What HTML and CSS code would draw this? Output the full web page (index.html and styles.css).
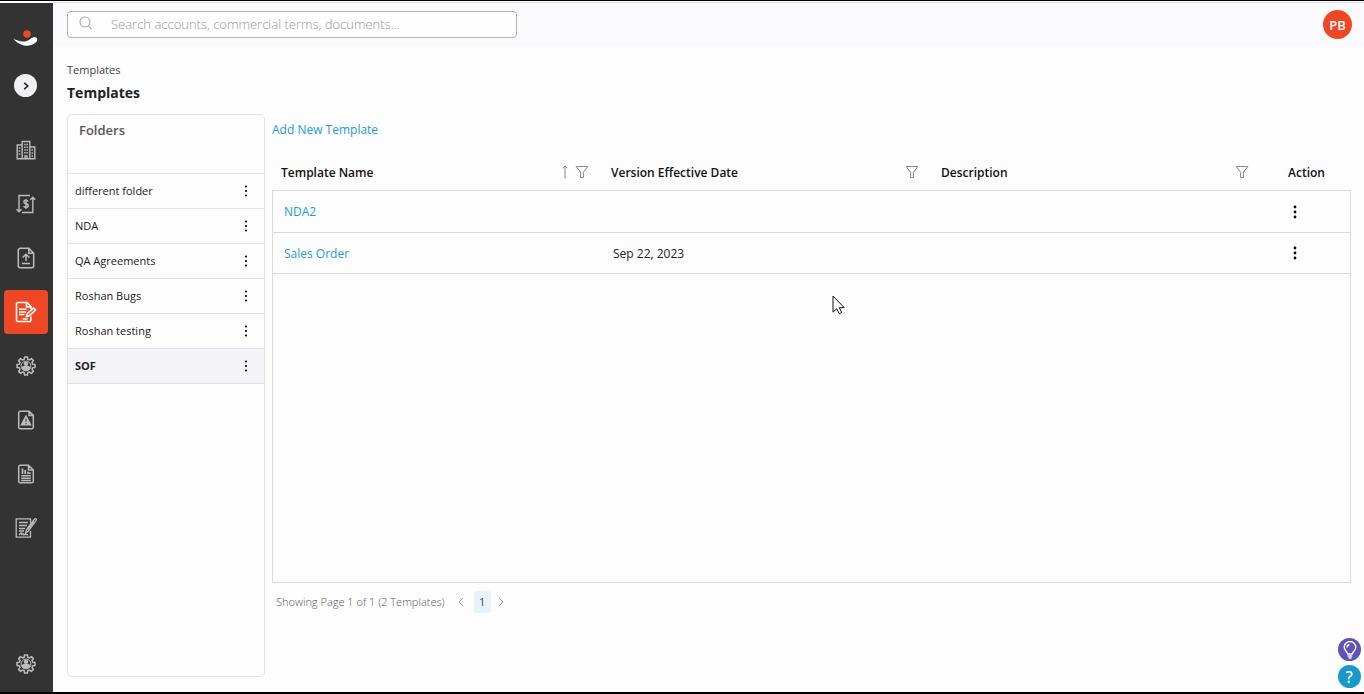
FILE: index.html
```html
<!DOCTYPE html>
<html lang="en">
<head>
    <meta charset="UTF-8">
    <meta name="viewport" content="width=device-width, initial-scale=1.0">
    <title>Templates</title>
    <link rel="stylesheet" href="styles.css">
</head>
<body>
    <!-- shared icons -->
    <svg class="sprite" aria-hidden="true">
        <symbol id="dots" viewBox="0 0 4 16">
            <circle cx="2" cy="3" r="1.4"/><circle cx="2" cy="8" r="1.4"/><circle cx="2" cy="13" r="1.4"/>
        </symbol>
        <symbol id="dots-small" viewBox="0 0 4 14">
            <circle cx="2" cy="2.5" r="1.1"/><circle cx="2" cy="7" r="1.1"/><circle cx="2" cy="11.5" r="1.1"/>
        </symbol>
        <symbol id="filter" viewBox="0 0 14 14">
            <path d="M1.2 1.5h11.6L8.4 7.2v5.3H5.6V7.2z" fill="none" stroke="currentColor"/>
        </symbol>
        <symbol id="gear" viewBox="0 0 20 20">
            <path d="M8.6 1h2.8l.4 2.3 1.7.7 1.9-1.4 2 2L16 6.5l.7 1.7 2.3.4v2.8l-2.3.4-.7 1.7 1.4 1.9-2 2-1.9-1.4-1.7.7-.4 2.3H8.6l-.4-2.3-1.7-.7-1.9 1.4-2-2L4 13.5l-.7-1.7L1 11.4V8.6l2.3-.4L4 6.5 2.6 4.6l2-2L6.5 4l1.7-.7z" fill="none" stroke="currentColor" stroke-width="1.5" stroke-linejoin="round"/>
            <circle cx="10" cy="10" r="4.9" fill="none" stroke="currentColor"/>
            <circle cx="10" cy="7.8" r="2.2" fill="currentColor"/>
            <path d="M5.6 12.4c0-2.2 1.8-2.6 4.4-2.6s4.4.4 4.4 2.6c-1 1.6-2.5 2.4-4.4 2.4s-3.400-.8-4.400-2.400z" fill="currentColor"/>
        </symbol>
    </svg>

    <div class="app">
        <aside class="sidebar">
            <a href="#" class="logo" aria-label="Home">
                <svg width="26" height="20" viewBox="0 0 26 20">
                    <circle cx="14" cy="6" r="3.8" fill="#ee4723"/>
                    <path d="M.2 10.6c5 3 12 4.6 17 .4 2-1.800 4-2.200 5.800-1.400 1.700.8 1.800 3 .2 4.400-3.600 3.400-8.200 4.200-12.200 3.400C6 16.4 2.6 13.8.2 10.600z" fill="#fff"/>
                </svg>
            </a>
            <button class="toggle" aria-label="Expand menu">
                <svg width="10" height="10" viewBox="0 0 10 10"><path d="M3.200 1.800L6.800 5 3.200 8.200" fill="none" stroke="#222" stroke-width="1.600"/></svg>
            </button>
            <nav class="menu">
                <a href="#" class="menu-item" aria-label="Accounts">
                    <svg width="20" height="20" viewBox="0 0 20 20" fill="none" stroke="currentColor" stroke-width="1.4">
                        <path d="M6.2 18.800V1.5h7.600v17.300zM6 5H1.200v13.800h5M14 7h4.800v11.800H14M9 18.500v-2.500h2v2.500"/>
                        <path d="M8.200 4.500h3.800M8.200 7.200h3.800M8.200 10h3.800M8.200 12.800h3.800M2.800 8h2M2.800 11h2M2.800 14h2M15.500 10h2M15.500 13h2M15.500 16h2" stroke-dasharray="1.500 .7"/>
                    </svg>
                </a>
                <a href="#" class="menu-item" aria-label="Orders">
                    <svg width="20" height="20" viewBox="0 0 20 20" fill="none" stroke="currentColor" stroke-width="1.4">
                        <path d="M14 1.500H3v16M.6 15.200L3 17.800l2.400-2.600M6 18.500h10.800v-15M14.400 5.800l2.400-2.600 2.400 2.600"/>
                        <path d="M12.200 7.500c-.5-.9-1.200-1.200-2.200-1.200-2.800 0-2.800 3.200 0 3.500 3 .4 3 3.700 0 3.700-1.100 0-1.900-.4-2.400-1.300M10 5v10"/>
                    </svg>
                </a>
                <a href="#" class="menu-item" aria-label="Uploads">
                    <svg width="20" height="22" viewBox="0 0 20 22" fill="none" stroke="currentColor" stroke-width="1.5">
                        <path d="M12.800 1.300H4.300a2 2 0 0 0-2 2v15.400a2 2 0 0 0 2 2h11.400a2 2 0 0 0 2-2V6.200zM12.800 1.300v4.900h4.900M10 14V7.500M6.600 10.500L10 7.200l3.400 3.300M6 16.500h8"/>
                    </svg>
                </a>
                <a href="#" class="menu-item active" aria-label="Templates" aria-current="page">
                    <svg width="22" height="22" viewBox="0 0 22 22" fill="none" stroke="currentColor" stroke-width="1.600">
                        <path d="M16 8V5.500L12 1.500H3a1.500 1.500 0 0 0-1.500 1.500v16A1.500 1.500 0 0 0 3 20.500h11.500A1.500 1.500 0 0 0 16 19v-3.500M11.500 1.500V6H16M4 8.300h7.500M4 11h7M4 13.500h5.500M7.500 18h5"/>
                        <path d="M11.500 15.500l1-3 6-5.500 2 2-6 5.700z"/>
                    </svg>
                </a>
                <a href="#" class="menu-item" aria-label="Users"><svg width="20" height="20"><use href="#gear"/></svg></a>
                <a href="#" class="menu-item" aria-label="Alerts">
                    <svg width="20" height="20" viewBox="0 0 20 20" fill="none" stroke="currentColor" stroke-width="1.5">
                        <path d="M13 1.200H4.300a1.600 1.600 0 0 0-1.600 1.600v14.400a1.600 1.600 0 0 0 1.600 1.600h11.400a1.600 1.600 0 0 0 1.600-1.600V5.400zM13 1.200v4.200h4.300"/>
                        <path d="M10 6.200l4.500 8.600h-9z" fill="currentColor"/>
                        <path d="M10 8.800v3M10 13v1.200" stroke="#333" stroke-width="1"/>
                    </svg>
                </a>
                <a href="#" class="menu-item" aria-label="Reports">
                    <svg width="20" height="20" viewBox="0 0 20 20" fill="none" stroke="currentColor" stroke-width="1.5">
                        <path d="M12.500 1.200H4.300a1.600 1.600 0 0 0-1.600 1.600v14.400a1.600 1.600 0 0 0 1.600 1.600h11.400a1.600 1.600 0 0 0 1.600-1.600V6zM12.500 1.200V6h4.800M5.200 11.800h9.600M5.200 14.200h9.600M5.200 16.400h9.600"/>
                        <path d="M6.500 10V4.500M9.200 10V6M12 10V7.800M14 10V8.500" stroke-width="1.800"/>
                    </svg>
                </a>
                <a href="#" class="menu-item" aria-label="Signatures">
                    <svg width="22" height="22" viewBox="0 0 22 22" fill="none" stroke="currentColor" stroke-width="1.3">
                        <path d="M15.500 14v6.200H1.200V1.800h14.300v4M4 5.500h9M4 8.500h8M4 11.500h6M4 14h5"/>
                        <path d="M4 18c2.500-3 3-2.500 2.500 0 2-2.500 2-1 2.500 0 1-1.500 1.500 0 4-.3"/>
                        <path d="M10.500 16.200l1.200-4L19.500 2c1.300-.8 2.300.2 1.600 1.400L13.600 13.800zM12.600 12.500l6-8"/>
                    </svg>
                </a>
            </nav>
            <a href="#" class="menu-item settings" aria-label="Settings"><svg width="20" height="20"><use href="#gear"/></svg></a>
        </aside>

        <div class="page">
            <header class="topbar">
                <label class="search">
                    <svg width="16" height="16" viewBox="0 0 16 16" fill="none" stroke="#aaa" stroke-width="1.1"><circle cx="7" cy="6" r="5"/><path d="M10.500 9.500l3 3.800"/></svg>
                    <input type="text" placeholder="Search accounts, commercial terms, documents..." aria-label="Search">
                </label>
                <button class="avatar">PB</button>
            </header>

            <main class="content">
                <div class="breadcrumb">Templates</div>
                <h1>Templates</h1>

                <div class="panels">
                    <section class="folders">
                        <h2>Folders</h2>
                        <ul>
                            <li><span>different folder</span><button aria-label="Folder actions"><svg width="4" height="14"><use href="#dots-small"/></svg></button></li>
                            <li><span>NDA</span><button aria-label="Folder actions"><svg width="4" height="14"><use href="#dots-small"/></svg></button></li>
                            <li><span>QA Agreements</span><button aria-label="Folder actions"><svg width="4" height="14"><use href="#dots-small"/></svg></button></li>
                            <li><span>Roshan Bugs</span><button aria-label="Folder actions"><svg width="4" height="14"><use href="#dots-small"/></svg></button></li>
                            <li><span>Roshan testing</span><button aria-label="Folder actions"><svg width="4" height="14"><use href="#dots-small"/></svg></button></li>
                            <li class="selected"><span>SOF</span><button aria-label="Folder actions"><svg width="4" height="14"><use href="#dots-small"/></svg></button></li>
                        </ul>
                    </section>

                    <section class="templates">
                        <a href="#" class="add-link">Add New Template</a>
                        <table>
                            <thead>
                                <tr>
                                    <th><div class="th">Template Name
                                        <span class="tools">
                                            <svg width="8" height="14" viewBox="0 0 8 14"><path d="M4 13.500V1M2 3.200L4 1l2 2.200" fill="none" stroke="currentColor"/></svg>
                                            <button aria-label="Filter"><svg width="14" height="14"><use href="#filter"/></svg></button>
                                        </span></div></th>
                                    <th><div class="th">Version Effective Date
                                        <span class="tools"><button aria-label="Filter"><svg width="14" height="14"><use href="#filter"/></svg></button></span></div></th>
                                    <th><div class="th">Description
                                        <span class="tools"><button aria-label="Filter"><svg width="14" height="14"><use href="#filter"/></svg></button></span></div></th>
                                    <th class="action">Action</th>
                                </tr>
                            </thead>
                            <tbody>
                                <tr>
                                    <td><a href="#">NDA2</a></td>
                                    <td></td>
                                    <td></td>
                                    <td class="action"><button aria-label="Row actions"><svg width="4" height="16"><use href="#dots"/></svg></button></td>
                                </tr>
                                <tr>
                                    <td><a href="#">Sales Order</a></td>
                                    <td>Sep 22, 2023</td>
                                    <td></td>
                                    <td class="action"><button aria-label="Row actions"><svg width="4" height="16"><use href="#dots"/></svg></button></td>
                                </tr>
                            </tbody>
                        </table>
                        <div class="grid-rest"></div>
                        <div class="pager">
                            <span>Showing Page 1 of 1 (2 Templates)</span>
                            <button aria-label="Previous page"><svg width="6" height="10" viewBox="0 0 6 10"><path d="M5 1L1 5l4 4" fill="none" stroke="currentColor"/></svg></button>
                            <button class="current">1</button>
                            <button aria-label="Next page"><svg width="6" height="10" viewBox="0 0 6 10"><path d="M1 1l4 4-4 4" fill="none" stroke="currentColor"/></svg></button>
                        </div>
                    </section>
                </div>
            </main>
        </div>
    </div>

    <div class="float-btns">
        <button class="tips" aria-label="Tips">
            <svg width="16" height="18" viewBox="0 0 16 18" fill="none" stroke="#fff" stroke-width="1.4">
                <path d="M5.700 13c0-2.200-3.500-3.300-3.500-6.700a5.800 5.800 0 0 1 11.600 0c0 3.400-3.500 4.500-3.500 6.700zM5.800 15h4.400M6.500 17h3M5 6.500c0-1.500 1-2.600 2.500-2.800"/>
            </svg>
        </button>
        <button class="help" aria-label="Help">?</button>
    </div>

    <svg class="cursor" width="14" height="20" viewBox="0 0 14 20"><path d="M1 1v16.200l3.700-3.500 2.500 5 2.500-1.200-2.400-4.900h4.900z" fill="#fff" stroke="#111"/></svg>
</body>
</html>
```
FILE: styles.css
```css
* {
    margin: 0;
    padding: 0;
    box-sizing: border-box;
}

body {
    font-family: 'Open Sans', 'Noto Sans', sans-serif;
    font-size: 12px;
    color: #222;
    background: #fdfdfd;
}

button {
    background: none;
    border: none;
    font: inherit;
    color: inherit;
    cursor: pointer;
}

a {
    color: #1d9bd1;
    text-decoration: none;
}

svg {
    display: block;
}

.sprite {
    position: absolute;
    width: 0;
    height: 0;
}

.app {
    display: flex;
    min-height: 100vh;
    border-top: 1px solid #000;
    border-bottom: 2px solid #000;
    padding-top: 2px;
}

/* Sidebar */
.sidebar {
    width: 53px;
    background: #333;
    display: flex;
    flex-direction: column;
    align-items: center;
    padding: 25px 2px 6px 0;
}

.toggle {
    width: 23px;
    height: 23px;
    margin: 26px 0 31px;
    border-radius: 50%;
    background: #f0f0f2;
    display: flex;
    align-items: center;
    justify-content: center;
}

.menu {
    display: flex;
    flex-direction: column;
    gap: 10px;
}

.menu-item {
    width: 44px;
    height: 44px;
    border-radius: 4px;
    color: #bcbcbc;
    display: flex;
    align-items: center;
    justify-content: center;
}

.menu-item.active {
    background: #ee4723;
    color: #fff;
}

.settings {
    margin-top: auto;
}

/* Header */
.page {
    flex: 1;
    min-width: 0;
    display: flex;
    flex-direction: column;
}

.topbar {
    height: 43px;
    padding: 0 12px 0 14px;
    background: #fafafc;
    box-shadow: 0 -1px #dcd8e0;
    display: flex;
    align-items: center;
    justify-content: space-between;
}

.search {
    width: 450px;
    height: 27px;
    border: 1px solid #b3b3b3;
    border-radius: 4px;
    background: #fdfdfd;
    padding: 0 0 2px 10px;
    display: flex;
    align-items: center;
    gap: 17px;
}

.search input {
    flex: 1;
    border: none;
    outline: none;
    background: none;
    font: inherit;
    font-size: 13px;
}

.search input::placeholder {
    color: #999;
    font-weight: 300;
}

.avatar {
    width: 29px;
    height: 29px;
    border-radius: 50%;
    background: #ee4723;
    color: #fff;
    font-size: 13px;
    font-weight: 600;
}

/* Content */
.content {
    flex: 1;
    padding: 16px 13px 15px 14px;
    display: flex;
    flex-direction: column;
}

.breadcrumb {
    font-size: 11px;
    line-height: 16px;
    color: #444;
}

h1 {
    font-size: 14px;
    line-height: 20px;
    margin: 5px 0 11px;
}

.panels {
    flex: 1;
    display: flex;
    gap: 7px;
}

/* Folder list */
.folders {
    width: 198px;
    border: 1px solid #e4e4e8;
    border-radius: 5px;
}

.folders h2 {
    height: 58px;
    padding: 5px 11px;
    font-size: 13px;
    line-height: 20px;
    font-weight: 600;
    color: #555;
}

.folders ul {
    list-style: none;
    border-bottom: 1px solid #dedee2;
}

.folders li {
    height: 35px;
    padding: 0 16px 1px 7px;
    border-top: 1px solid #e4e4e8;
    font-size: 11px;
    line-height: 16px;
    display: flex;
    align-items: center;
    justify-content: space-between;
}

.folders li.selected {
    background: #f4f4f8;
    border-color: #dedee2;
    font-weight: bold;
}

/* Templates grid */
.templates {
    flex: 1;
    min-width: 0;
    display: flex;
    flex-direction: column;
}

.add-link {
    align-self: flex-start;
    line-height: 20px;
    margin: 6px 0 14px;
}

table {
    width: 100%;
    table-layout: fixed;
    border-collapse: separate;
    border-spacing: 0;
}

th {
    height: 36px;
    padding: 0 13px 0 9px;
    font-weight: 600;
    text-align: left;
    color: #111;
}

.th,
.tools {
    display: flex;
    align-items: center;
}

.th {
    justify-content: space-between;
}

.tools {
    gap: 6px;
    color: #888;
}

th.action {
    width: 89px;
    padding: 0;
    text-align: center;
}

td {
    height: 41px;
    padding: 0 11px;
    border-bottom: 1px solid #dcdcdc;
}

td:first-child {
    border-left: 1px solid #dcdcdc;
}

td:last-child {
    border-right: 1px solid #dcdcdc;
}

tbody tr:first-child td {
    height: 43px;
    border-top: 1px solid #dcdcdc;
}

td.action {
    padding: 0 20px 0 31px;
}

td button {
    display: block;
}

.grid-rest {
    flex: 1;
    border: 1px solid #dcdcdc;
    border-top: none;
}

.pager {
    height: 94px;
    padding: 8px 4px;
    font-size: 11px;
    line-height: 22px;
    color: #555;
    display: flex;
    align-items: flex-start;
}

.pager span {
    font-weight: 300;
    margin-right: 8px;
}

.pager button {
    width: 17px;
    height: 22px;
    border-radius: 3px;
    color: #999;
    display: flex;
    align-items: center;
    justify-content: center;
}

.pager .current {
    background: #e9f2fb;
    color: #444;
    margin: 0 2px 0 4px;
}

/* Floating buttons */
.float-btns {
    position: fixed;
    right: 3px;
    bottom: 6px;
    display: flex;
    flex-direction: column;
    gap: 4px;
}

.float-btns button {
    width: 23px;
    height: 23px;
    border-radius: 50%;
    display: flex;
    align-items: center;
    justify-content: center;
}

.tips {
    background: #5f52b8;
}

.help {
    background: #1899cc;
    color: #fff;
    font-size: 16px;
    font-weight: 600;
}

.cursor {
    position: absolute;
    left: 832px;
    top: 295px;
}
```
